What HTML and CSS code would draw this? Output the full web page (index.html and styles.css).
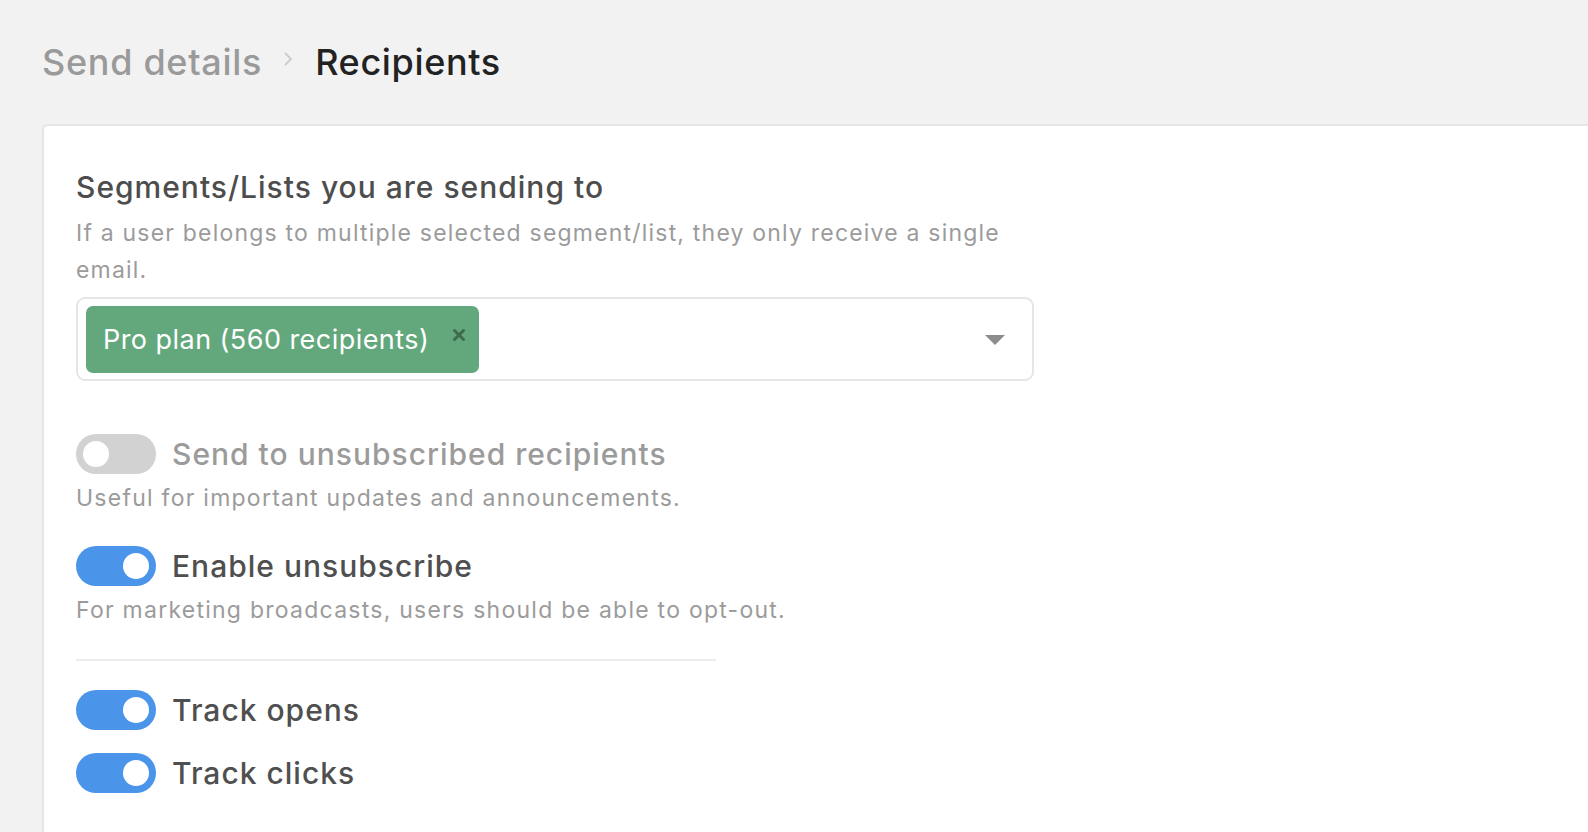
FILE: index.html
```html
<!DOCTYPE html>
<html>
<head>
<meta charset="utf-8">
<link rel="stylesheet" href="styles.css">
</head>
<body>
<div class="page">
  <div class="crumbs">
    <span class="crumb-prev">Send details</span>
    <svg class="chev" width="14" height="22" viewBox="0 0 14 22"><path d="M4 5 L10 11 L4 17" fill="none" stroke="#cccccc" stroke-width="1.8"/></svg>
    <span class="crumb-cur">Recipients</span>
  </div>
  <div class="card">
    <h2 class="sec-title">Segments/Lists you are sending to</h2>
    <p class="sec-desc">If a user belongs to multiple selected segment/list, they only receive a single email.</p>
    <div class="select">
      <div class="tag">
        <span class="tag-text">Pro plan (560 recipients)</span>
        <svg class="tag-x" width="14" height="14" viewBox="0 0 14 14"><path d="M2.5 2.5 L11.5 11.5 M11.5 2.5 L2.5 11.5" stroke="#3d6b4c" stroke-width="3" stroke-linecap="round"/></svg>
      </div>
      <svg class="caret" width="20" height="10" viewBox="0 0 20 10"><path d="M0 0 H20 L10 10 Z" fill="#8c8c8c"/></svg>
    </div>

    <div class="opt first">
      <div class="opt-row">
        <span class="toggle off"><span class="knob"></span></span>
        <span class="opt-label muted">Send to unsubscribed recipients</span>
      </div>
      <p class="opt-desc">Useful for important updates and announcements.</p>
    </div>
    <div class="opt second">
      <div class="opt-row">
        <span class="toggle on"><span class="knob"></span></span>
        <span class="opt-label">Enable unsubscribe</span>
      </div>
      <p class="opt-desc">For marketing broadcasts, users should be able to opt-out.</p>
    </div>
    <hr class="divider">
    <div class="opt-row simple">
      <span class="toggle on"><span class="knob"></span></span>
      <span class="opt-label">Track opens</span>
    </div>
    <div class="opt-row simple">
      <span class="toggle on"><span class="knob"></span></span>
      <span class="opt-label">Track clicks</span>
    </div>
  </div>
</div>
</body>
</html>
```

FILE: styles.css
```css
* { box-sizing: border-box; }
html, body {
  margin: 0;
  padding: 0;
  background: #f2f2f2;
  font-family: Inter, "Noto Sans", sans-serif;
  overflow: hidden;
}
.page {
  padding: 36px 0 0 42px;
  height: 832px;
}
.crumbs {
  display: flex;
  align-items: center;
  height: 52px;
}
.crumb-prev {
  font-size: 36px;
  font-weight: 500;
  color: #9a9a9a;
  letter-spacing: 0.7px;
}
.chev {
  margin: 0 20px 0 19px;
  position: relative;
  top: -3px;
}
.crumb-cur {
  font-size: 36px;
  font-weight: 500;
  color: #222222;
  letter-spacing: 0.65px;
}
.card {
  margin-top: 36px;
  background: #ffffff;
  border-left: 2px solid #e6e6e6;
  border-top: 2px solid #e6e6e6;
  border-top-left-radius: 6px;
  padding: 41px 0 40px 32px;
  height: 800px;
}
.sec-title {
  margin: 0;
  font-size: 30px;
  font-weight: 500;
  color: #4d4d4d;
  line-height: 40px;
  letter-spacing: 1px;
}
.sec-desc {
  margin: 8px 0 0;
  width: 960px;
  font-size: 23px;
  color: #9b9b9b;
  line-height: 37px;
  letter-spacing: 1.2px;
}
.select {
  margin-top: 8px;
  width: 958px;
  height: 84px;
  border: 2px solid #e6e6e6;
  border-radius: 9px;
  display: flex;
  align-items: center;
  justify-content: space-between;
  padding: 0 27px 0 8px;
}
.tag {
  height: 67px;
  background: #63a87c;
  border-radius: 7px;
  display: flex;
  align-items: center;
  padding: 0 13px 0 17px;
}
.tag-text {
  color: #ffffff;
  font-size: 27px;
  letter-spacing: 0.45px;
}
.tag-x {
  margin-left: 23px;
  position: relative;
  top: -4px;
}
.caret {
  position: relative;
  top: 1px;
}
.opt.first { margin-top: 53px; }
.opt.second { margin-top: 30px; }
.opt-row {
  display: flex;
  align-items: center;
  height: 40px;
}
.toggle {
  width: 80px;
  height: 40px;
  border-radius: 20px;
  position: relative;
  flex: none;
}
.toggle.on { background: #4a94ea; }
.toggle.off { background: #d2d2d2; }
.knob {
  position: absolute;
  top: 7px;
  width: 26px;
  height: 26px;
  border-radius: 50%;
  background: #ffffff;
}
.toggle.on .knob { right: 7px; }
.toggle.off .knob { left: 7px; }
.opt-label {
  margin-left: 16px;
  font-size: 30px;
  font-weight: 500;
  color: #4f4f4f;
  letter-spacing: 1px;
}
.opt-label.muted { color: #9b9b9b; }
.opt-desc {
  margin: 6px 0 0;
  font-size: 23px;
  color: #9b9b9b;
  line-height: 36px;
  letter-spacing: 1.25px;
}
.divider {
  margin: 31px 0 0;
  width: 640px;
  border: 0;
  height: 2px;
  background: #ececec;
}
.divider + .opt-row { margin-top: 29px; }
.simple + .simple { margin-top: 23px; }
```
